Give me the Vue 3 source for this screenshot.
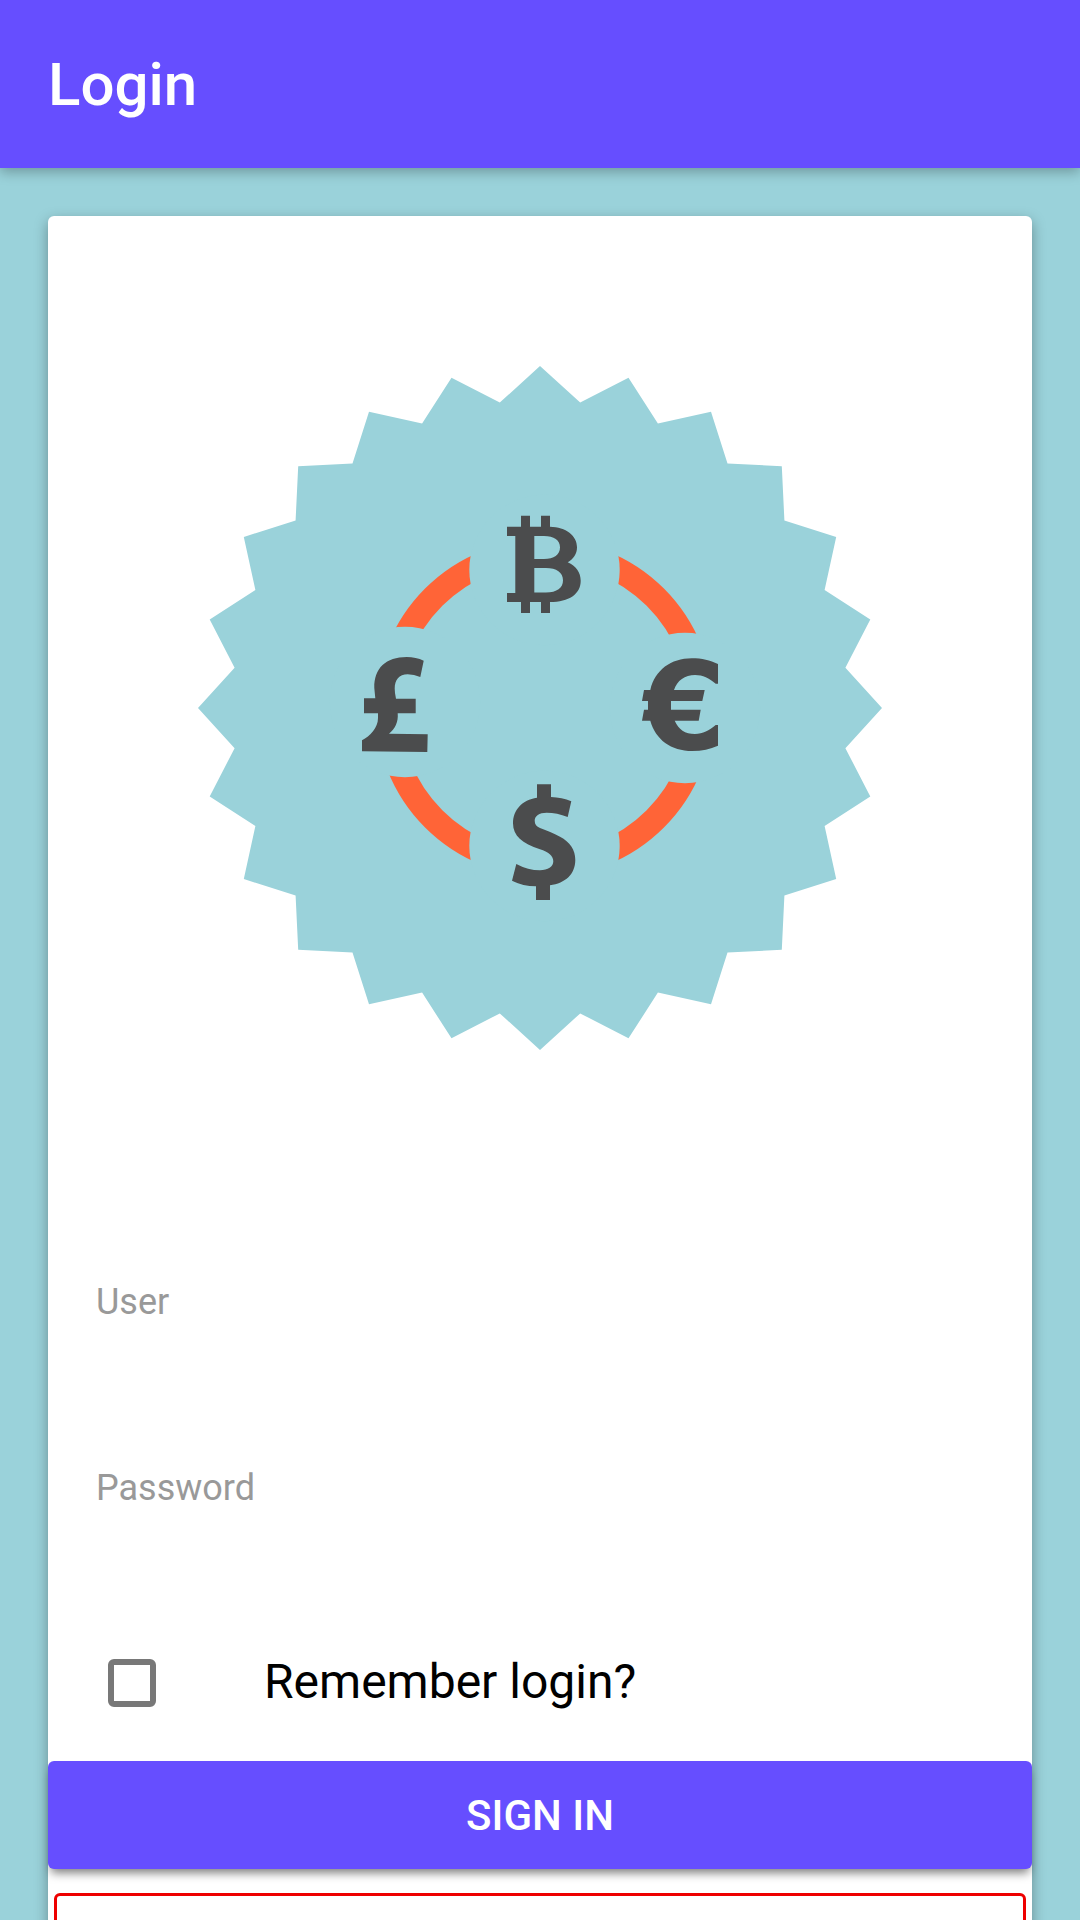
<script setup>
import { ref } from 'vue'

const user = ref('')
const password = ref('')
const remember = ref(false)

// 24-pointed seal: outer and inner corners alternate every 7.5 degrees
const seal = Array.from({ length: 48 }, (_, i) => {
  const radius = i % 2 ? 308 : 342
  const angle = (i * Math.PI) / 24
  return `${(492 + radius * Math.sin(angle)).toFixed(1)},${(492 - radius * Math.cos(angle)).toFixed(1)}`
}).join(' ')
</script>

<template>
  <div class="screen">
    <header class="toolbar">
      <h1>Login</h1>
    </header>
    <main class="content">
      <form class="card" @submit.prevent>
        <svg class="logo" viewBox="0 0 984 984" aria-hidden="true">
          <polygon class="seal" :points="seal" />
          <circle class="ring" cx="496.5" cy="492" r="156.7" />
          <circle class="seal" cx="496.5" cy="354" r="75.2" />
          <circle class="seal" cx="637" cy="492" r="75.2" />
          <circle class="seal" cx="496.5" cy="630" r="75.2" />
          <circle class="seal" cx="357" cy="486" r="75.2" />
          <g class="signs">
            <path fill-rule="evenodd" d="M459 310.7H473V299.7H482V310.7H493V299.7H502V310.7C518 311 529 319.5 529 331.3C529 338 525.5 343 519.7 346.3C528 350 532.7 356.500 532.7 364.7C532.7 378 521 386 502 386V397H493V386H482V397H473V386H459V377H467.3V320H459ZM486.300 320V343H496C506 343 512 339 512 331.300C512 324 506 320 496 320ZM486.300 352V376.500H498C509 376.500 515 372 515 364.300C515 356.500 508.500 352 498 352Z" />
            <path d="M375.7 444.7L372.3 461Q366 458.3 359.7 458.3C351 458.3 346.7 464 346.7 472.5Q346.7 477 348 482.7H367.7V497.3H349.7C350.5 506 347 513 341 517.7L379.7 518.3L379.3 536L314 535.3V524.3C322 520 330 512 330 502V497.3H316V482.3H327.3L326.3 472C326 452 338 441 358.7 441Q368 441 375.7 444.7Z" />
            <path d="M670 448V467.7H667.7C661 462 655 459 647 459C637 459 629 464.500 626 474H656.700L654.300 485H623V493.700H652.700L650.700 504.700H626.700C630.500 513.500 637 518 647 518C655 518 661 514.500 667.700 509H670V529.700C662 533 654 535 644.300 535C623 535 607.500 523.500 602.300 504.700H594L596 493.700H600V485H594L596 474H602.300C607 454 623 442.300 643.700 442.300C654 442.300 662 444.300 670 448Z" />
            <path d="M489 568.300H503V581Q514 581.300 523.300 585.300L519.700 601Q509 596.700 498.700 596.700C491 596.700 486.700 600 486.700 604.700C486.700 608.500 488.500 610.500 492 612C499 615 505.500 617 512 620.700C522 626 527.300 633.500 527.300 644C527.300 658 517.500 667.300 502 669.300V684H488V670.300Q475 670.300 464 664.700L468.300 648Q480 654.300 492 654.300C500 654.300 505.300 650.700 505.300 645.300C505.300 640 500.500 636 492 633.300C474 627.500 465 620 465 607.300C465 594 474 584 489 581.700Z" />
          </g>
        </svg>
        <div class="fields">
          <div class="field">
            <label for="user">User</label>
            <input id="user" v-model="user" type="text" />
          </div>
          <div class="field">
            <label for="password">Password</label>
            <input id="password" v-model="password" type="password" />
          </div>
          <div class="remember">
            <input id="remember" v-model="remember" type="checkbox" />
            <label for="remember">Remember login?</label>
          </div>
        </div>
        <button class="submit" type="submit">SIGN IN</button>
        <div class="outlined"></div>
      </form>
    </main>
  </div>
</template>

<style>
body {
  margin: 0;
}
</style>

<style scoped>
.screen {
  display: flex;
  flex-direction: column;
  height: 100vh;
  overflow: hidden;
  background: #9ad2da;
  font-family: Roboto, "Liberation Sans", sans-serif;
}
.toolbar {
  flex: none;
  display: flex;
  align-items: center;
  box-sizing: border-box;
  height: 168px;
  padding: 2px 48px 0;
  background: #664eff;
  box-shadow: 0 4px 12px rgba(0, 0, 0, 0.28);
}
h1 {
  margin: 0;
  color: #fff;
  font-size: 60px;
  font-weight: 500;
  line-height: 70px;
}
.content {
  flex: 1;
  min-height: 0;
  padding: 48px 48px 0;
}
.card {
  padding-bottom: 48px;
  border-radius: 6px;
  background: #fff;
  box-shadow: 0 5px 14px rgba(0, 0, 0, 0.34);
}
.logo {
  display: block;
  width: 100%;
}
.seal {
  fill: #9ad2da;
}
.ring {
  fill: none;
  stroke: #ff6437;
  stroke-width: 24.4;
}
.signs {
  fill: #4b4c4d;
}
.fields {
  padding: 81px 48px 48px;
}
.field {
  display: flex;
  flex-direction: column;
  margin-bottom: 48px;
}
.field label {
  color: #999;
  font-size: 36px;
  line-height: 42px;
}
.field input {
  height: 96px;
  padding: 0;
  border: 0;
  outline: 0;
  background: transparent;
  color: #000;
  font: 48px Roboto, sans-serif;
}
.remember {
  display: flex;
  gap: 108px;
  height: 60px;
  padding-left: 12px;
}
.remember input {
  appearance: none;
  box-sizing: border-box;
  width: 48px;
  height: 48px;
  margin: 6px 0;
  border: 6px solid #787878;
  border-radius: 6px;
}
.remember input:checked {
  background: #664eff;
}
.remember label {
  color: #000;
  font-size: 48px;
  line-height: 58px;
}
.submit {
  display: block;
  width: 100%;
  height: 108px;
  padding: 0;
  border: 0;
  border-radius: 6px;
  background: #664eff;
  box-shadow: 0 7px 10px -3px rgba(0, 0, 0, 0.5);
  color: #fff;
  font: 500 42px Roboto, sans-serif;
}
.outlined {
  height: 102px;
  margin: 24px 6px 0;
  border: 3px solid #e00;
  border-radius: 6px;
}
</style>
